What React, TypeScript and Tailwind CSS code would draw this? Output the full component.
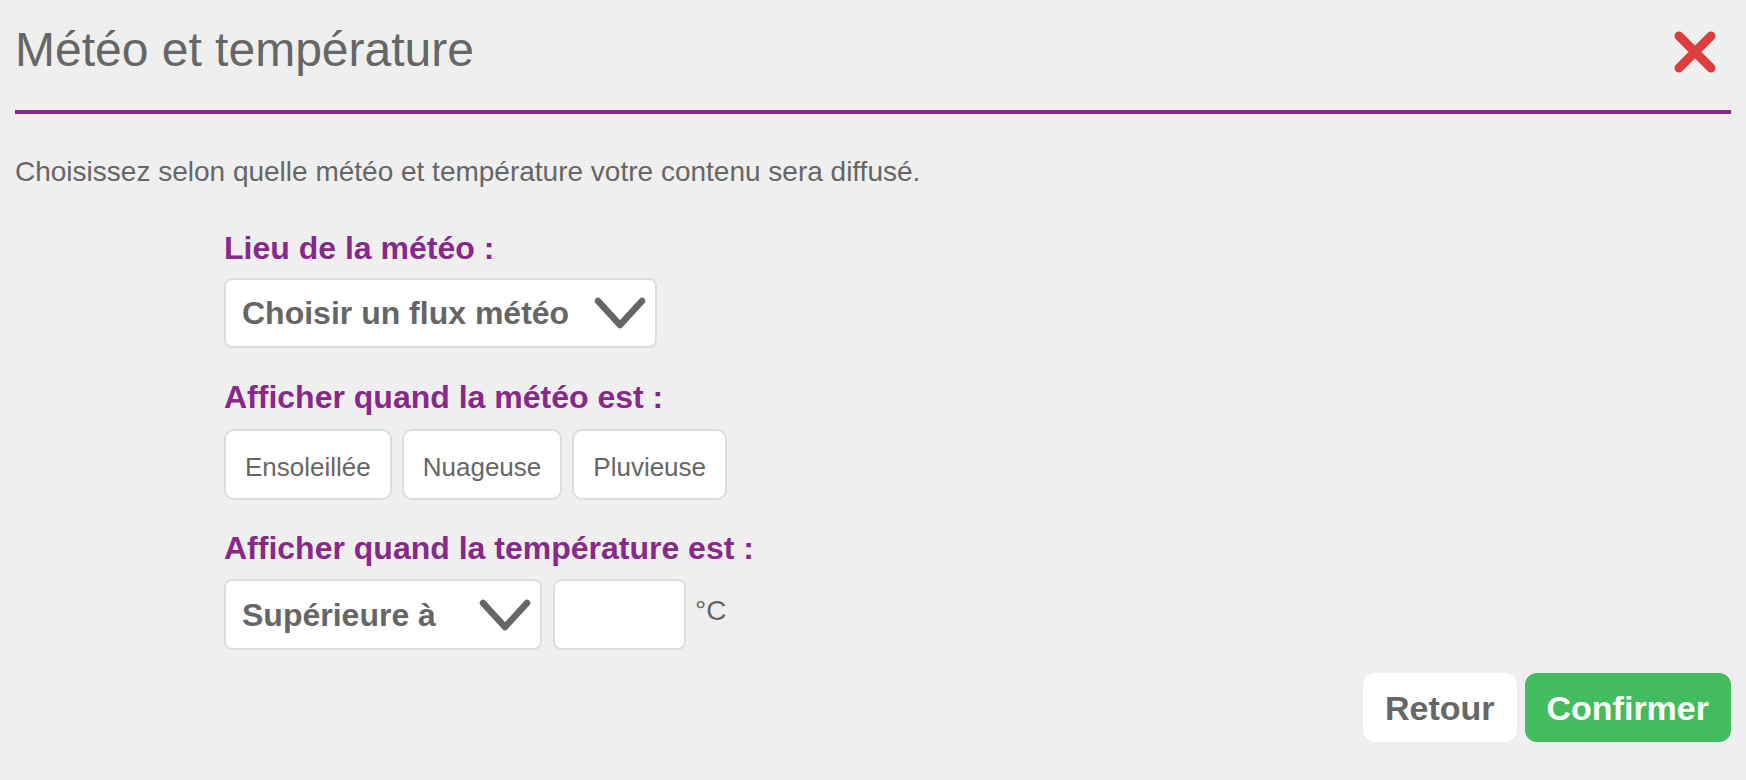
import React from "react";

function Chevron() {
  return (
    <svg width="52" height="32" viewBox="0 0 52 32" fill="none">
      <path d="M4 4 L26 28 L48 4" stroke="#666666" strokeWidth="6.5" strokeLinecap="round" strokeLinejoin="round" />
    </svg>
  );
}

export default function App() {
  return (
    <div className="h-[780px] w-full overflow-hidden bg-[#efefef] px-[15px] text-[#666666]" style={{ fontFamily: '"Liberation Sans", Arial, sans-serif' }}>
      <div className="flex h-[114px] items-start justify-between border-b-4 border-[#88288b]">
        <h1 className="pt-[26px] text-[48px] font-normal leading-[48px]">Météo et température</h1>
        <button className="mt-[31px] mr-[15px] h-[42px] w-[42px]" aria-label="Fermer">
          <svg width="42" height="42" viewBox="0 0 42 42" fill="none">
            <path d="M5 5 L37 37 M37 5 L5 37" stroke="#df3d3d" strokeWidth="9" strokeLinecap="round" />
          </svg>
        </button>
      </div>

      <p className="mt-[42px] text-[28px] leading-[32px]">Choisissez selon quelle météo et température votre contenu sera diffusé.</p>

      <div className="pl-[209px]">
        <div className="mt-[42px] text-[32px] font-bold leading-[36px] text-[#88288b]">Lieu de la météo :</div>
        <div className="mt-[12px] flex h-[70px] w-[433px] items-center justify-between rounded-[8px] border-2 border-[#dddddd] bg-white pl-[16px] pr-[9px]">
          <span className="text-[32px] font-bold leading-[36px]">Choisir un flux météo</span>
          <Chevron />
        </div>

        <div className="mt-[31px] text-[32px] font-bold leading-[36px] text-[#88288b]">Afficher quand la météo est :</div>
        <div className="mt-[14px] flex h-[71px] gap-[10px]">
          {["Ensoleillée", "Nuageuse", "Pluvieuse"].map((t) => (
            <div key={t} className="flex items-center rounded-[10px] border-2 border-[#dddddd] bg-white px-[19px] pt-[4px] text-[26px] leading-[30px]">
              {t}
            </div>
          ))}
        </div>

        <div className="mt-[30px] text-[32px] font-bold leading-[36px] text-[#88288b]">Afficher quand la température est :</div>
        <div className="mt-[13px] flex h-[71px] items-start">
          <div className="flex h-[71px] w-[318px] items-center justify-between rounded-[8px] border-2 border-[#dddddd] bg-white pl-[16px] pr-[9px]">
            <span className="text-[32px] font-bold leading-[36px]">Supérieure à</span>
            <Chevron />
          </div>
          <div className="ml-[11px] h-[71px] w-[133px] rounded-[8px] border-2 border-[#dddddd] bg-white" />
          <span className="ml-[9px] mt-[16px] text-[28px] leading-[32px]">°C</span>
        </div>
      </div>

      <div className="mt-[23px] flex justify-end gap-[8px]">
        <button className="h-[69px] rounded-[12px] bg-white px-[22px] text-[34px] font-bold leading-[40px] text-[#666666]">Retour</button>
        <button className="h-[69px] rounded-[12px] bg-[#42bc5c] px-[22px] text-[34px] font-bold leading-[40px] text-white">Confirmer</button>
      </div>
    </div>
  );
}
